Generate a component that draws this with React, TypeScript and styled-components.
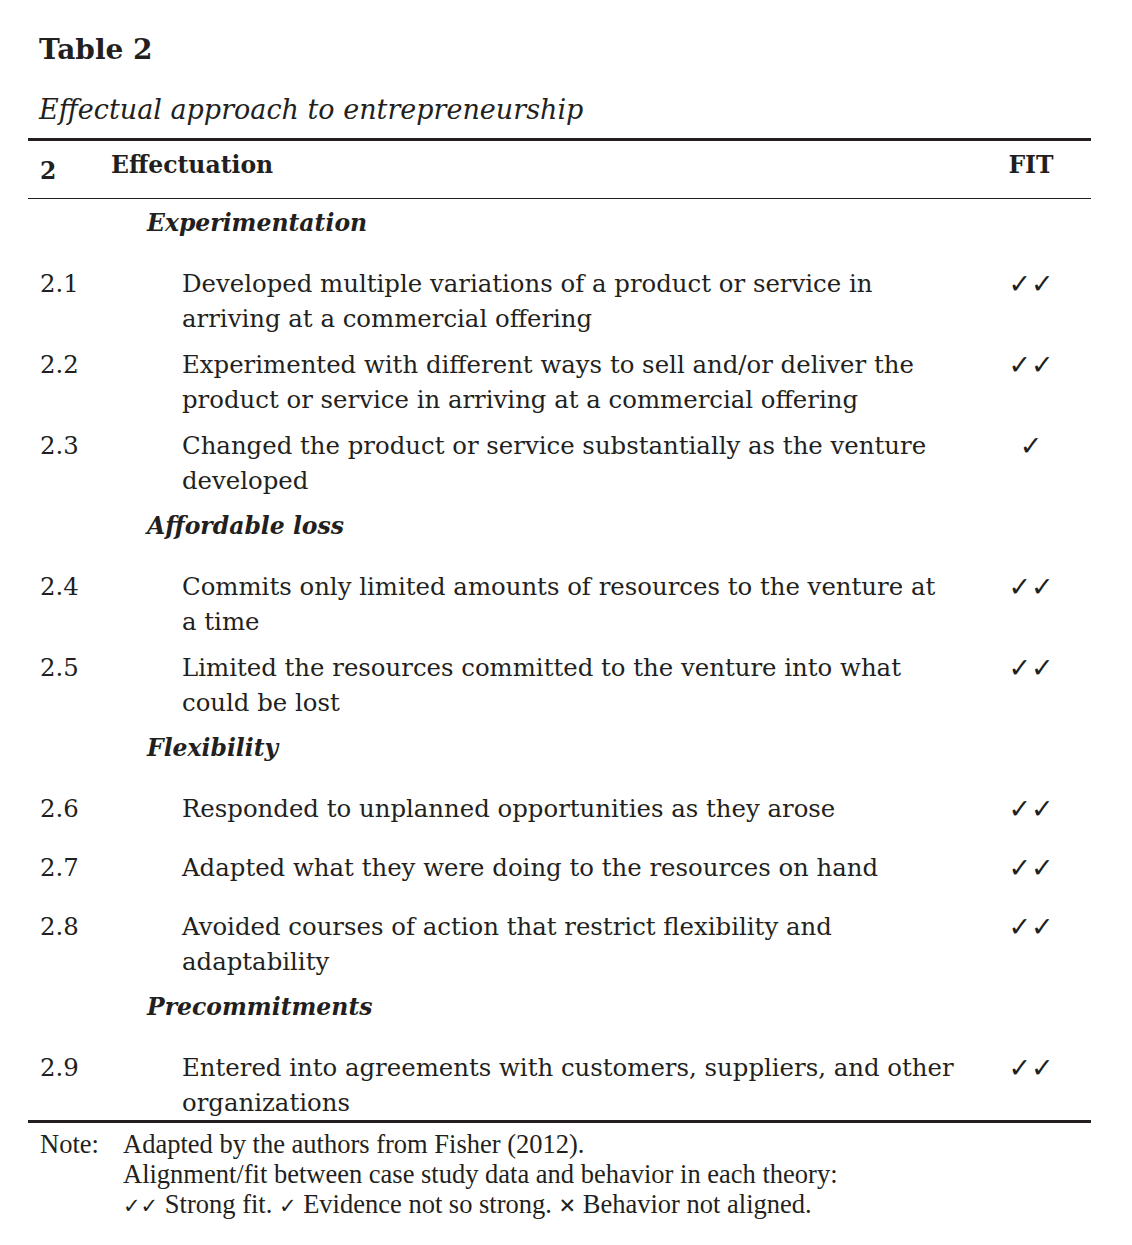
import React from 'react';
import styled, { createGlobalStyle } from 'styled-components';

const ink = '#231f20';

const GlobalStyle = createGlobalStyle`
    body {
        margin: 0;
        background: #ffffff;
        color: ${ink};
        font-family: "DejaVu Serif", serif;
    }
`

type Item = { num: string; lines: string[]; fit: 2 | 1 };
type Group = { title: string; items: Item[] };

const groups: Group[] = [
    {
        title: 'Experimentation',
        items: [
            { num: '2.1', lines: ['Developed multiple variations of a product or service in', 'arriving at a commercial offering'], fit: 2 },
            { num: '2.2', lines: ['Experimented with different ways to sell and/or deliver the', 'product or service in arriving at a commercial offering'], fit: 2 },
            { num: '2.3', lines: ['Changed the product or service substantially as the venture', 'developed'], fit: 1 },
        ],
    },
    {
        title: 'Affordable loss',
        items: [
            { num: '2.4', lines: ['Commits only limited amounts of resources to the venture at', 'a time'], fit: 2 },
            { num: '2.5', lines: ['Limited the resources committed to the venture into what', 'could be lost'], fit: 2 },
        ],
    },
    {
        title: 'Flexibility',
        items: [
            { num: '2.6', lines: ['Responded to unplanned opportunities as they arose'], fit: 2 },
            { num: '2.7', lines: ['Adapted what they were doing to the resources on hand'], fit: 2 },
            { num: '2.8', lines: ['Avoided courses of action that restrict flexibility and', 'adaptability'], fit: 2 },
        ],
    },
    {
        title: 'Precommitments',
        items: [
            { num: '2.9', lines: ['Entered into agreements with customers, suppliers, and other', 'organizations'], fit: 2 },
        ],
    },
]

export default function App() {
    return (
        <Page>
            <GlobalStyle />
            <Title>Table 2</Title>
            <Caption>Effectual approach to entrepreneurship</Caption>
            <Table>
                <HeaderRow>
                    <HeaderNum>2</HeaderNum>
                    <HeaderLabel>Effectuation</HeaderLabel>
                    <HeaderFit>FIT</HeaderFit>
                </HeaderRow>
                <Body>
                    {groups.map((g) => (
                        <React.Fragment key={g.title}>
                            <SectionRow>{g.title}</SectionRow>
                            {g.items.map((it) => (
                                <Row key={it.num}>
                                    <Num>{it.num}</Num>
                                    <Text>
                                        {it.lines.map((l, i) => <Line key={i}>{l}</Line>)}
                                    </Text>
                                    <Fit>{it.fit === 2 ? '✓✓' : '✓'}</Fit>
                                </Row>
                            ))}
                        </React.Fragment>
                    ))}
                </Body>
            </Table>
            <Note>
                <NoteLabel>Note:</NoteLabel>
                <NoteLines>
                    <div>Adapted by the authors from Fisher (2012).</div>
                    <div>Alignment/fit between case study data and behavior in each theory:</div>
                    <div><Mark>✓✓</Mark> Strong fit. <Mark>✓</Mark> Evidence not so strong. <Mark>✕</Mark> Behavior not aligned.</div>
                </NoteLines>
            </Note>
        </Page>
    );
}

const Page = styled.div`
    width: 1063px;
    margin-left: 28px;
    padding-top: 30px;
`

const Title = styled.h1`
    margin: 0;
    padding-left: 11px;
    font-size: 28px;
    line-height: 40px;
    font-weight: bold;
`

const Caption = styled.p`
    margin: 22px 0 0;
    padding-left: 11px;
    font-size: 27px;
    line-height: 36px;
    font-style: italic;
`

const Table = styled.div`
    margin-top: 10px;
    border-top: 3px solid ${ink};
    border-bottom: 3px solid ${ink};
`

const HeaderRow = styled.div`
    display: grid;
    grid-template-columns: 71px 1fr 120px;
    box-sizing: border-box;
    height: 58px;
    padding: 7px 0 0 12px;
    border-bottom: 1px solid ${ink};
    font-size: 23.5px;
    line-height: 35px;
    font-weight: bold;
`

const HeaderNum = styled.div`
    padding-top: 6px;
`

const HeaderLabel = styled.div``

const HeaderFit = styled.div`
    text-align: center;
`

const Body = styled.div`
    padding-top: 7px;
`

const SectionRow = styled.div`
    box-sizing: border-box;
    height: 60px;
    padding-left: 119px;
    font-size: 23.5px;
    line-height: 35px;
    font-weight: bold;
    font-style: italic;
`

const Row = styled.div`
    display: grid;
    grid-template-columns: 142px 1fr 120px;
    box-sizing: border-box;
    min-height: 59px;
    padding: 0 0 11px 12px;
    font-size: 24.4px;
    line-height: 35px;

    &:last-child {
        padding-bottom: 0;
    }
`

const Num = styled.div``

const Text = styled.div``

const Line = styled.span`
    display: block;
    white-space: nowrap;
`

const Fit = styled.div`
    text-align: center;
    font-family: "DejaVu Sans", sans-serif;
    font-size: 27px;
`

const Note = styled.div`
    display: grid;
    grid-template-columns: 83px 1fr;
    padding: 6px 0 0 12px;
    font-family: "Liberation Serif", serif;
    font-size: 26.5px;
    line-height: 30px;
`

const NoteLabel = styled.div``

const NoteLines = styled.div``

const Mark = styled.span`
    font-family: "DejaVu Sans", sans-serif;
    font-size: 21px;
`
